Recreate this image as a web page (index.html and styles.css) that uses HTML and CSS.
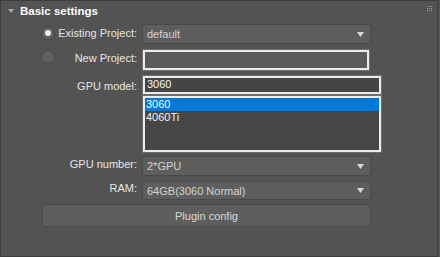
FILE: index.html
```html
<!DOCTYPE html>
<html lang="en">

<head>
    <meta charset="UTF-8" />
    <meta name="viewport" content="width=device-width, initial-scale=1.0" />
    <title>Basic settings</title>
    <link rel="stylesheet" href="styles.css">
</head>

<body>
    <div class="rollout">
        <div class="rollout-head">
            <span class="caret"></span>
            <span class="title">Basic settings</span>
            <span class="grip">
                <i></i><i></i><i></i><i></i><i></i><i></i><i></i><i></i><i></i>
            </span>
        </div>

        <div class="row row-1">
            <div class="label pad-2">
                <span class="radio checked"></span>
                Existing Project:
            </div>
            <div class="combo">
                <span>default</span>
                <svg class="arrow" width="7" height="5" viewBox="0 0 7 5"><polygon points="0,0 7,0 3.5,5" fill="#d8d8d8" /></svg>
            </div>
        </div>

        <div class="row row-2">
            <div class="label pad-1">
                <span class="radio"></span>
                New Project:
            </div>
            <div class="textbox"></div>
        </div>

        <div class="row row-3">
            <div class="label pad-3">GPU model:</div>
            <div class="textbox dark">3060</div>
        </div>

        <div class="row row-list">
            <div class="label"></div>
            <ul class="listbox">
                <li class="selected">3060</li>
                <li>4060Ti</li>
            </ul>
        </div>

        <div class="row row-4">
            <div class="label pad-1">GPU number:</div>
            <div class="combo">
                <span>2*GPU</span>
                <svg class="arrow" width="7" height="5" viewBox="0 0 7 5"><polygon points="0,0 7,0 3.5,5" fill="#d8d8d8" /></svg>
            </div>
        </div>

        <div class="row row-5">
            <div class="label">RAM:</div>
            <div class="combo short">
                <span>64GB(3060 Normal)</span>
                <svg class="arrow" width="7" height="5" viewBox="0 0 7 5"><polygon points="0,0 7,0 3.5,5" fill="#d8d8d8" /></svg>
            </div>
        </div>

        <button class="plugin-btn">Plugin config</button>
    </div>
</body>

</html>
```

FILE: styles.css
```css
body {
    margin: 0;
    background: #535353;
    font-family: 'Liberation Sans', Arial, sans-serif;
    font-size: 11px;
    color: #e8e8e8;
}

.rollout {
    width: 438px;
    height: 257px;
    box-sizing: border-box;
    border: 1px solid #3d3d3d;
    background: #535353;
}

.rollout-head {
    height: 22px;
    display: flex;
    align-items: center;
    padding-left: 7px;
}

.caret {
    width: 0;
    height: 0;
    border-left: 3px solid transparent;
    border-right: 3px solid transparent;
    border-top: 4px solid #a8a8a8;
    margin-right: 6px;
    margin-top: -2px;
}

.title {
    font-weight: bold;
    font-size: 11.5px;
    color: #ffffff;
    margin-top: -3px;
}

.grip {
    margin-left: auto;
    margin-right: 5px;
    margin-top: -8px;
    display: grid;
    grid-template-columns: repeat(3, 1px);
    gap: 1px;
}

.grip i {
    width: 1px;
    height: 1px;
    background: #a0a0a0;
}

.row {
    display: flex;
    align-items: flex-start;
    padding-left: 40px;
}

.row-1 {
    margin-top: 1px;
}

.row-2 {
    margin-top: 6px;
}

.row-3 {
    margin-top: 6px;
}

.row-list {
    margin-top: 2px;
}

.row-4 {
    margin-top: 4px;
}

.row-5 {
    margin-top: 5px;
}

.label {
    width: 96px;
    flex: none;
    display: flex;
    align-items: flex-start;
    justify-content: flex-end;
    line-height: 14px;
    white-space: nowrap;
    margin-right: 5px;
    color: #e6e6e6;
}

.pad-1 {
    padding-top: 1px;
}

.pad-2 {
    padding-top: 2px;
}

.pad-3 {
    padding-top: 3px;
}

.radio {
    width: 12px;
    height: 12px;
    border-radius: 50%;
    background: #5f5f5f;
    border: 1px solid #484848;
    margin-right: auto;
    display: flex;
    align-items: center;
    justify-content: center;
    flex: none;
}

.row-1 .radio {
    margin-top: 0;
}

.row-2 .radio {
    margin-top: -1px;
}

.radio.checked::after {
    content: "";
    width: 6px;
    height: 6px;
    border-radius: 50%;
    background: #f2f2f2;
}

.combo {
    width: 229px;
    height: 20px;
    box-sizing: border-box;
    background: #5e5e5e;
    border: 1px solid #494949;
    border-radius: 2px;
    display: flex;
    align-items: center;
    padding: 0 6px 0 4px;
    color: #d4d4d4;
}

.short {
    height: 19px;
}

.combo .arrow {
    margin-left: auto;
}

.textbox {
    width: 226px;
    height: 20px;
    box-sizing: border-box;
    margin-left: 1px;
    background: #5a5a5a;
    border: 2px solid #ececec;
    box-shadow: 0 0 0 1px #6e6e6e;
    padding-left: 2px;
    line-height: 15px;
}

.textbox.dark {
    width: 238px;
    height: 18px;
    background: #454545;
    color: #f4f4f4;
    line-height: 13px;
}

.listbox {
    list-style: none;
    margin: 0 0 0 1px;
    padding: 0;
    width: 238px;
    height: 56px;
    box-sizing: border-box;
    background: #464646;
    border: 2px solid #ececec;
    box-shadow: 0 0 0 1px #6e6e6e;
    color: #f4f4f4;
}

.listbox li {
    height: 13px;
    line-height: 13px;
    padding-left: 1px;
}

.listbox li.selected {
    background: #0078d7;
    color: #ffffff;
}

.plugin-btn {
    display: block;
    margin: 4px 0 0 41px;
    width: 329px;
    height: 23px;
    background: #5e5e5e;
    border: 1px solid #494949;
    border-radius: 3px;
    font-family: inherit;
    font-size: 11px;
    color: #d8d8d8;
    padding: 0;
}
```
